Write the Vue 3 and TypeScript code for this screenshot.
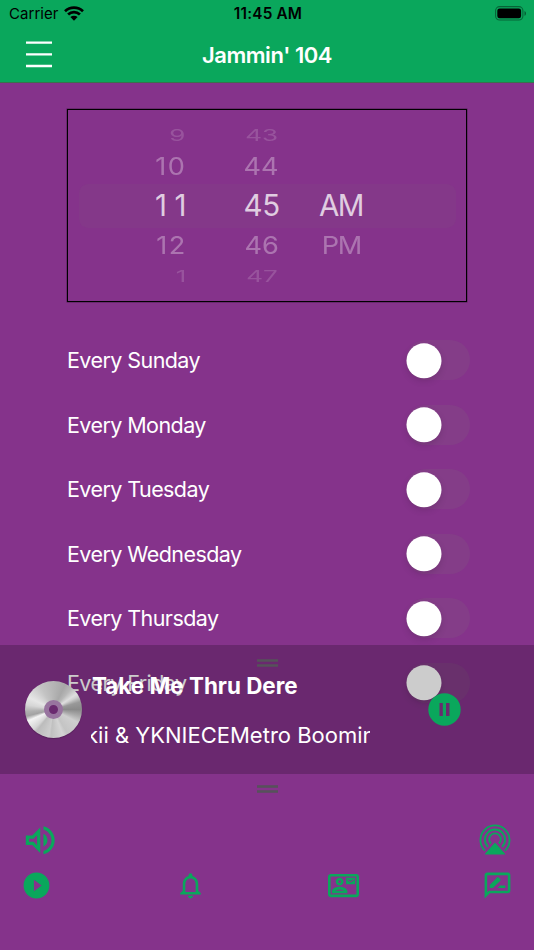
<script setup lang="ts">
interface PickerRow {
  kind: string
  hour: string
  minute: string
  period: string
}

const pickerRows: PickerRow[] = [
  { kind: 'far', hour: '9', minute: '43', period: '' },
  { kind: 'near', hour: '10', minute: '44', period: '' },
  { kind: 'current', hour: '11', minute: '45', period: 'AM' },
  { kind: 'near', hour: '12', minute: '46', period: 'PM' },
  { kind: 'far', hour: '1', minute: '47', period: '' },
]

const days: string[] = ['Sunday', 'Monday', 'Tuesday', 'Wednesday', 'Thursday', 'Friday']
</script>

<template>
  <div class="screen">
    <header class="header">
      <div class="status">
        <div class="status-left">
          <span class="carrier">Carrier</span>
          <svg class="wifi" viewBox="0 0 20 15">
            <path d="M1 5.2a13 13 0 0 1 18 0M4.1 8.5a8.5 8.5 0 0 1 11.8 0" fill="none" stroke="#000" stroke-width="2.7" />
            <path d="M6.4 11.1a5.2 5.2 0 0 1 7.2 0L10 14.8z" />
          </svg>
        </div>
        <span class="clock">11:45 AM</span>
        <div class="status-right">
          <svg class="battery" viewBox="0 0 32 15">
            <rect x=".6" y=".6" width="27.3" height="13.4" rx="4" fill="none" stroke="#000" stroke-opacity=".4" stroke-width="1.1" />
            <rect x="2.3" y="2.4" width="23.8" height="9.8" rx="2.3" />
            <path d="M29.5 5v4.8c2-.8 2-4 0-4.8z" fill-opacity=".45" />
          </svg>
        </div>
      </div>
      <div class="navbar">
        <svg class="menu" viewBox="0 0 26 27">
          <path d="M0 1.7h26M0 13.3h26M0 25h26" stroke="#fff" stroke-width="2.3" />
        </svg>
        <h1 class="title">Jammin' 104</h1>
      </div>
    </header>

    <main class="content">
      <section class="picker">
        <div v-for="(row, i) in pickerRows" :key="i" class="picker-row" :class="row.kind">
          <span class="cell hour"><b>{{ row.hour }}</b></span>
          <span class="cell minute"><b>{{ row.minute }}</b></span>
          <span class="cell period"><b>{{ row.period }}</b></span>
        </div>
      </section>

      <section class="alarms">
        <div v-for="day in days" :key="day" class="alarm">
          <span class="day">Every {{ day }}</span>
          <span class="toggle">
            <svg class="knob" viewBox="0 0 35 35"><circle cx="17.5" cy="17.5" r="17.5" /></svg>
          </span>
        </div>
      </section>

      <section class="player">
        <svg class="handle" viewBox="0 0 21 10">
          <path d="M0 2.4h21M0 7.6h21" stroke="#56525a" stroke-width="2.5" />
        </svg>
        <div class="player-body">
          <div class="disc"><i></i></div>
          <div class="track">
            <div class="song"><span>Take Me Thru Dere</span></div>
            <div class="artist"><span>kii &amp; YKNIECEMetro Boomin</span></div>
          </div>
          <svg class="pause" viewBox="0 0 33 33">
            <circle cx="16.5" cy="16.5" r="16.2" fill="#0aa75c" />
            <path d="M11.5 10h3.3v13h-3.3zM18 10h3.5v13H18z" fill="#6a2a6f" />
          </svg>
        </div>
      </section>
    </main>

    <footer class="footer">
      <svg class="handle" viewBox="0 0 21 10">
        <path d="M0 2.4h21M0 7.6h21" stroke="#56525a" stroke-width="2.5" />
      </svg>
      <div class="icons sound">
        <svg class="volume" viewBox="0 0 24 24">
          <path d="M3 9v6h4l5 5V4L7 9H3zm7-.17v6.34L7.83 13H5v-2h2.83L10 8.83zM16.5 12c0-1.77-1.02-3.29-2.5-4.03v8.05c1.48-.73 2.5-2.25 2.5-4.02zM14 3.23v2.06c2.89.86 5 3.54 5 6.71s-2.11 5.85-5 6.71v2.06c4.01-.91 7-4.49 7-8.77s-2.99-7.86-7-8.77z" />
        </svg>
        <svg class="cast" viewBox="0 0 32 32">
          <g fill="none" stroke="#0aa75c" stroke-width="1.8">
            <path d="M5.9 26.6a14.6 14.6 0 1 1 20.2 0" />
            <path d="M9 22.9a10.1 10.1 0 1 1 14 0" />
            <path d="M12 19.4a5.8 5.8 0 1 1 8 0" />
          </g>
          <path d="M16 18.6 26 29.7a.5.5 0 0 1-.4.8H6.4a.5.5 0 0 1-.4-.8z" />
        </svg>
      </div>
      <nav class="icons tabs">
        <svg class="tab" viewBox="0 0 24 24">
          <path d="M12 2C6.48 2 2 6.48 2 12s4.48 10 10 10 10-4.48 10-10S17.52 2 12 2zm-2 14.5v-9l6 4.5-6 4.5z" />
        </svg>
        <svg class="tab" viewBox="0 0 24 24">
          <path d="M12 22c1.1 0 2-.9 2-2h-4c0 1.1.89 2 2 2zm6-6v-5c0-3.07-1.64-5.64-4.5-6.32V4c0-.83-.67-1.5-1.5-1.5s-1.5.67-1.5 1.5v.68C7.63 5.36 6 7.92 6 11v5l-2 2v1h16v-1l-2-2zm-2 1H8v-6c0-2.48 1.51-4.5 4-4.5s4 2.02 4 4.5v6z" />
        </svg>
        <svg class="tab" viewBox="0 0 24 24">
          <path d="M22 3H2C.9 3 0 3.9 0 5v14c0 1.1.9 2 2 2h20c1.1 0 1.99-.9 1.99-2L24 5c0-1.1-.9-2-2-2zm0 16H2V5h20v14zM21 6h-7v5h7V6zm-1 2-2.5 1.75L15 8V7l2.5 1.75L20 7v1zM9 12c1.65 0 3-1.35 3-3s-1.35-3-3-3-3 1.35-3 3 1.35 3 3 3zm0-4c.55 0 1 .45 1 1s-.45 1-1 1-1-.45-1-1 .45-1 1-1zm6 8.59c0-2.5-3.97-3.58-6-3.58s-6 1.08-6 3.58V18h12v-1.41zM5.48 16c.74-.5 2.22-1 3.52-1s2.77.49 3.52 1H5.48z" />
        </svg>
        <svg class="tab" viewBox="0 0 24 24">
          <path d="M20 2H4c-1.1 0-2 .9-2 2v18l4-4h14c1.1 0 2-.9 2-2V4c0-1.1-.9-2-2-2zm0 14H5.17L4 17.17V4h16v12zM12 14h6v-2h-4zm2.36-5.87c.2-.2.2-.51 0-.71l-1.77-1.77c-.2-.2-.51-.2-.71 0L6 11.53V14h2.47l5.89-5.87z" />
        </svg>
      </nav>
    </footer>
  </div>
</template>

<style>
body {
  background: #85338b;
}
</style>

<style scoped>
.screen {
  width: 534px;
  height: 950px;
  display: flex;
  flex-direction: column;
  overflow: hidden;
  background: #85338b;
  color: #fff;
  font-family: Inter, "Liberation Sans", sans-serif;
}
.screen span,
.title {
  white-space: nowrap;
}
.header {
  height: 83px;
  flex: none;
  box-sizing: border-box;
  background: #0aa75c;
  border-bottom: 1px solid #38724d;
}
.status {
  height: 27px;
  display: grid;
  grid-template-columns: 1fr auto 1fr;
  align-items: center;
  padding: 0 7px 0 9px;
  color: #000;
}
.status-left {
  display: flex;
  align-items: center;
  gap: 5px;
}
.carrier {
  font-size: 15px;
  letter-spacing: 0.05px;
}
.wifi {
  width: 20px;
  height: 15px;
}
.clock {
  font-size: 15.3px;
  font-weight: 600;
  letter-spacing: 0.2px;
}
.status-right {
  display: flex;
  justify-content: flex-end;
}
.battery {
  width: 32px;
  height: 15px;
}
.navbar {
  height: 55px;
  display: grid;
  grid-template-columns: 1fr auto 1fr;
  align-items: center;
  padding: 0 26px;
}
.menu {
  width: 26px;
  height: 27px;
}
.title {
  margin: 0;
  font-size: 22px;
  line-height: 28px;
  font-weight: 600;
  letter-spacing: -0.45px;
}
.content {
  position: relative;
  height: 691px;
  flex: none;
  box-sizing: border-box;
  padding: 26px 64px 0 67px;
  overflow: hidden;
}
.picker {
  width: 400px;
  height: 193px;
  box-sizing: border-box;
  border: 1px solid #000;
  box-shadow: 0 0 0 0.5px rgba(0, 0, 0, 0.4);
  padding: 12px 10px 0 11px;
}
.picker-row {
  height: 35px;
  display: grid;
  grid-template-columns: 109px 92px 122px;
  align-items: center;
  color: rgba(255, 255, 255, 0.32);
}
.picker-row.far {
  height: 27px;
  color: rgba(255, 255, 255, 0.16);
}
.picker-row.current {
  height: 44px;
  border-radius: 9px;
  background: rgba(128, 90, 128, 0.15);
  color: rgba(255, 255, 255, 0.75);
}
.cell {
  display: flex;
  height: 26px;
  line-height: 24px;
}
.cell b {
  display: block;
  font-size: 29.5px;
  font-weight: 400;
}
.near .cell b {
  transform: scale(0.92, 0.82);
}
.far .cell b {
  transform: scale(0.88, 0.54);
}
.hour,
.minute {
  justify-content: flex-end;
}
.hour b {
  letter-spacing: 1.5px;
}
.current .hour b {
  margin-right: -6px;
  letter-spacing: 7.5px;
}
.current .minute b {
  letter-spacing: -0.2px;
}
.period {
  justify-content: center;
}
.period b {
  letter-spacing: -1.4px;
}
.alarms {
  padding-top: 26px;
}
.alarm {
  height: 64.5px;
  display: flex;
  align-items: center;
  justify-content: space-between;
}
.day {
  font-size: 21.5px;
  letter-spacing: -0.57px;
}
.toggle {
  width: 64px;
  height: 40px;
  box-sizing: border-box;
  display: flex;
  align-items: center;
  border-radius: 20px;
  background: rgba(128, 90, 128, 0.28);
}
.knob {
  width: 35px;
  height: 35px;
  overflow: visible;
  fill: #fff;
  transform: translate(0.5px, 0.3px);
  filter: drop-shadow(0 3px 3px rgba(0, 0, 0, 0.12));
}
.player {
  position: absolute;
  left: 0;
  right: 0;
  bottom: 0;
  height: 129px;
  background: rgba(0, 0, 0, 0.2);
}
.handle {
  display: block;
  width: 21px;
  height: 10px;
  margin: 13px auto 0;
}
.player-body {
  height: 100px;
  display: flex;
  padding-left: 25px;
}
.disc {
  width: 57px;
  height: 57px;
  flex: none;
  margin-top: 13px;
  border-radius: 50%;
  display: grid;
  place-items: center;
  background: conic-gradient(#b5b5b5 0deg, #a8a8a8 25deg, #b8b8b8 40deg, #dedede 56deg, #d0d0d0 62deg, #999 74deg, #8a8a8a 90deg, #aaa 104deg, #cfcfcf 118deg, #c4c4c4 150deg, #d4d4d4 160deg, #c0c0c0 185deg, #cdcdcd 190deg, #bcbcbc 218deg, #d5d5d5 225deg, #e8e8e8 238deg, #f4f4f4 246deg, #a2a2a2 256deg, #b0b0b0 266deg, #d6d6d6 280deg, #e6e6e6 296deg, #d6d6d6 312deg, #c4c4c4 330deg, #b5b5b5 360deg);
  box-shadow: 0 1px 1px rgba(0, 0, 0, 0.2);
}
.disc i {
  width: 9px;
  height: 9px;
  border: 5px solid #98749f;
  border-radius: 50%;
  background: #6a2a6f;
}
.track {
  width: 279px;
  padding-left: 9px;
}
.song {
  height: 35px;
  line-height: 35px;
  font-size: 22.4px;
  font-weight: 700;
}
.artist {
  height: 64px;
  line-height: 64px;
  font-size: 22px;
  overflow: hidden;
}
.song span {
  margin-left: 1px;
}
.artist span {
  margin-left: -5px;
}
.pause {
  width: 33px;
  height: 33px;
  margin: 25px 0 0 58px;
}
.footer {
  height: 176px;
  overflow: hidden;
}
.footer .handle {
  margin-top: 10px;
}
.icons {
  display: flex;
  align-items: center;
  justify-content: space-between;
  fill: #0aa75c;
}
.sound {
  height: 40px;
  margin-top: 26px;
  padding: 0 23px 0 21px;
}
.volume {
  width: 38.5px;
  height: 38.5px;
}
.cast {
  width: 32px;
  height: 32px;
}
.tabs {
  height: 32px;
  margin-top: 9px;
  padding: 0 21px;
}
.tab {
  width: 31px;
  height: 31px;
  overflow: visible;
}
</style>
